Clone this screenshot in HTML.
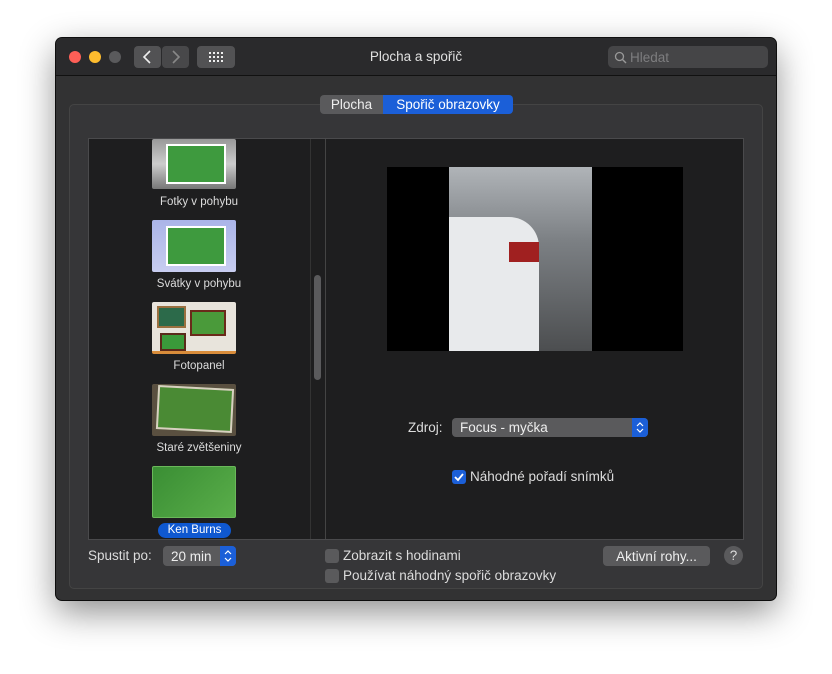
<!DOCTYPE html><html><head><meta charset="utf-8"><style>
*{box-sizing:border-box;margin:0;padding:0}
body{width:832px;height:674px;background:#fff;position:relative;overflow:hidden;font-family:"Liberation Sans",sans-serif;font-size:13.5px;color:#dcdcdc}
.a{position:absolute}
.win{left:56px;top:38px;width:720px;height:562px;background:#323233;border-radius:6px;box-shadow:0 12px 35px rgba(0,0,0,.45),0 0 0 1px #111;overflow:hidden}
.tb{left:0;top:0;width:720px;height:38px;background:#2a2a2c;border-bottom:1px solid #111}
.dot{width:12px;height:12px;border-radius:50%;top:13px}
.btn{background:#525254;border-radius:4px;height:22px;top:8px}
.thumb{left:152px;width:84px;height:52px;border-radius:2px}
.lab{left:88px;width:222px;text-align:center;font-size:11.5px;color:#dcdcdc}
.cb{width:14px;height:14px;border-radius:3px;background:#5a5a5c}
</style></head><body>
<div class="a win">
 <div class="a tb"></div>
 <div class="a dot" style="left:13px;background:#fe5f57"></div>
 <div class="a dot" style="left:33px;background:#febc2e"></div>
 <div class="a dot" style="left:53px;background:#5a5a5c"></div>
 <div class="a btn" style="left:78px;width:27px"><svg width="27" height="22"><path d="M16 5l-6 6 6 6" fill="none" stroke="#eee" stroke-width="1.6"/></svg></div>
 <div class="a btn" style="left:106px;width:27px;background:#48484a"><svg width="27" height="22"><path d="M11 5l6 6-6 6" fill="none" stroke="#888" stroke-width="1.6"/></svg></div>
 <div class="a btn" style="left:141px;width:38px"><svg width="38" height="22"><g fill="#eee"><rect x="12" y="6" width="2" height="2"/><rect x="16" y="6" width="2" height="2"/><rect x="20" y="6" width="2" height="2"/><rect x="24" y="6" width="2" height="2"/><rect x="12" y="10" width="2" height="2"/><rect x="16" y="10" width="2" height="2"/><rect x="20" y="10" width="2" height="2"/><rect x="24" y="10" width="2" height="2"/><rect x="12" y="14" width="2" height="2"/><rect x="16" y="14" width="2" height="2"/><rect x="20" y="14" width="2" height="2"/><rect x="24" y="14" width="2" height="2"/></g></svg></div>
 <div class="a" style="left:0;width:720px;top:11px;text-align:center;color:#e0e0e0">Plocha a spořič</div>
 <div class="a" style="left:552px;top:8px;width:160px;height:22px;background:#454547;border-radius:5px;color:#7d7d7f;padding:4px 0 0 22px">Hledat<svg class="a" style="left:6px;top:5px" width="13" height="13"><circle cx="5.5" cy="5.5" r="4" fill="none" stroke="#999" stroke-width="1.3"/><path d="M8.5 8.5l3.5 3.5" stroke="#999" stroke-width="1.4"/></svg></div>
</div>
<div class="a" style="left:69px;top:104px;width:694px;height:485px;background:#363638;border:1px solid #444;border-radius:5px"></div>
<div class="a" style="left:320px;top:95px;width:63px;height:19px;background:#5a5a5c;border-radius:4px 0 0 4px;text-align:center;padding-top:2px;color:#eee">Plocha</div>
<div class="a" style="left:383px;top:95px;width:130px;height:19px;background:#1b5fd8;border-radius:0 4px 4px 0;text-align:center;padding-top:2px;color:#fff">Spořič obrazovky</div>
<div class="a" style="left:88px;top:138px;width:656px;height:402px;background:#1e1e1f;border:1px solid #4a4a4c"></div>
<div class="a" style="left:310px;top:139px;width:1px;height:400px;background:#333"></div>
<div class="a" style="left:325px;top:139px;width:1px;height:400px;background:#444"></div>
<div class="a" style="left:314px;top:275px;width:7px;height:105px;background:#5a5a5c;border-radius:4px"></div>
<div class="a thumb" style="top:139px;height:50px;background:linear-gradient(#999,#ccc 50%,#777)"><div class="a" style="left:14px;top:5px;width:60px;height:40px;background:#3e9a3e;border:2px solid #fff"></div></div>
<div class="a lab" style="top:196px">Fotky v pohybu</div>
<div class="a thumb" style="top:220px;background:linear-gradient(#aab4e8,#c8cdf0)"><div class="a" style="left:14px;top:6px;width:60px;height:40px;background:#3e9a3e;border:2px solid #fff"></div></div>
<div class="a lab" style="top:278px">Svátky v pohybu</div>
<div class="a thumb" style="top:302px;background:#e8e4dc;border-bottom:3px solid #d88c3a"><div class="a" style="left:5px;top:4px;width:29px;height:22px;background:#2c6a4a;border:2px solid #9a7040"></div><div class="a" style="left:38px;top:8px;width:36px;height:26px;background:#4a9a3a;border:2px solid #6a2a1a"></div><div class="a" style="left:8px;top:31px;width:26px;height:18px;background:#3a9a3a;border:2px solid #5a2a1a"></div></div>
<div class="a lab" style="top:360px">Fotopanel</div>
<div class="a thumb" style="top:384px;background:#5a5040"><div class="a" style="left:5px;top:3px;width:76px;height:44px;background:#4a8a34;border:2px solid #d8d0c0;transform:rotate(3deg)"></div></div>
<div class="a lab" style="top:442px">Staré zvětšeniny</div>
<div class="a thumb" style="top:466px;background:linear-gradient(135deg,#3a8e34,#5aae4a);border:1px solid #6ab85a"></div>
<div class="a" style="left:158px;top:523px;width:73px;height:15px;background:#0f58d0;border-radius:8px;text-align:center;font-size:11.5px;color:#fff;padding-top:1px">Ken Burns</div>
<div class="a" style="left:387px;top:167px;width:296px;height:184px;background:#000"></div>
<div class="a" style="left:449px;top:167px;width:143px;height:184px;background:linear-gradient(#b0b4b8,#7c8084 40%,#4c4e50)"><div class="a" style="left:0;top:50px;width:90px;height:134px;background:#e8eaec;border-radius:0 30px 0 0"></div><div class="a" style="left:60px;top:75px;width:30px;height:20px;background:#a02020"></div></div>
<div class="a" style="left:408px;top:420px;color:#dcdcdc">Zdroj:</div>
<div class="a" style="left:452px;top:418px;width:196px;height:19px;background:#5a5a5c;border-radius:4px;padding:2px 0 0 8px;color:#eee">Focus - myčka<div class="a" style="right:0;top:0;width:16px;height:19px;background:#1b5fd8;border-radius:0 4px 4px 0"><svg width="16" height="19"><path d="M5 8l3-3 3 3M5 11l3 3 3-3" fill="none" stroke="#fff" stroke-width="1.2"/></svg></div></div>
<div class="a cb" style="left:452px;top:470px;background:#1b5fd8"><svg width="14" height="14"><path d="M3 7l3 3 5-6" fill="none" stroke="#fff" stroke-width="1.8"/></svg></div>
<div class="a" style="left:470px;top:469px;color:#dcdcdc">Náhodné pořadí snímků</div>
<div class="a" style="left:88px;top:548px">Spustit po:</div>
<div class="a" style="left:163px;top:546px;width:73px;height:20px;background:#5a5a5c;border-radius:4px;padding:3px 0 0 8px;color:#eee">20 min<div class="a" style="right:0;top:0;width:16px;height:20px;background:#1b5fd8;border-radius:0 4px 4px 0"><svg width="16" height="20"><path d="M5 8l3-3 3 3M5 12l3 3 3-3" fill="none" stroke="#fff" stroke-width="1.2"/></svg></div></div>
<div class="a cb" style="left:325px;top:549px"></div>
<div class="a" style="left:343px;top:548px">Zobrazit s hodinami</div>
<div class="a cb" style="left:325px;top:569px"></div>
<div class="a" style="left:343px;top:568px">Používat náhodný spořič obrazovky</div>
<div class="a" style="left:603px;top:546px;width:107px;height:20px;background:#5a5a5c;border-radius:4px;text-align:center;padding-top:3px;color:#eee">Aktivní rohy...</div>
<div class="a" style="left:724px;top:546px;width:19px;height:19px;border-radius:50%;background:#5a5a5c;text-align:center;padding-top:2px;color:#ddd">?</div>
</body></html>
